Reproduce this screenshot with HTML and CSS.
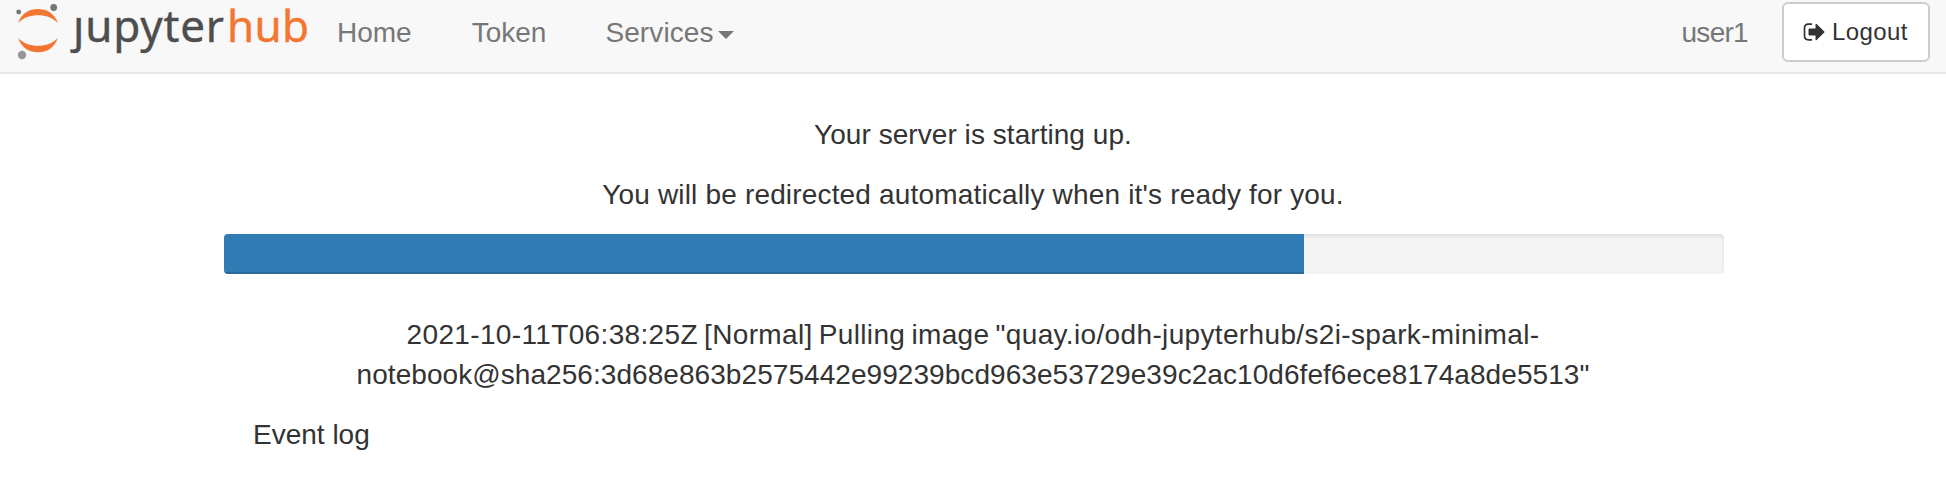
FILE: index.html
```html
<!DOCTYPE html>
<html lang="en">
<head>
<meta charset="utf-8">
<title>JupyterHub</title>
<link rel="stylesheet" href="styles.css">
</head>
<body>
<nav class="navbar">
  <a class="brand">
    <svg width="308" height="72" viewBox="0 0 308 72">
      <path d="M18 23C22 13 29 9 38 9S54 13 58 23C52 17.500 46 15.300 38 15.300S24 17.500 18 23Z" fill="#f37733"/>
      <path d="M18 38C22 48 29 52.300 38 52.300S54 48 58 38C52 43.500 46 45.800 38 45.800S24 43.500 18 38Z" fill="#f37733"/>
      <circle cx="53.700" cy="7.500" r="3.400" fill="#767677"/>
      <circle cx="18.700" cy="12" r="2.400" fill="#767677"/>
      <circle cx="22" cy="55" r="4.200" fill="#989798"/>
      <text class="wordmark" x="73" y="42" textLength="151" fill="#4e4e4e" stroke="#4e4e4e">jupyter</text>
      <rect x="70" y="3" width="15" height="14.500" fill="#f8f8f8"/>
      <text class="wordmark" x="227" y="42" textLength="82" fill="#f37733" stroke="#f37733">hub</text>
    </svg>
  </a>
  <ul class="links">
    <li class="home">Home</li>
    <li class="token">Token</li>
    <li class="services">Services<span class="caret"></span></li>
  </ul>
  <div class="account">
    <span class="user">user1</span>
    <a class="logout">
      <svg width="22" height="20" viewBox="0 0 22 20">
        <path d="M9 2.200H5.500Q1.500 2.200 1.500 6.200V13.800Q1.500 17.800 5.500 17.800H9" fill="none" stroke="#333" stroke-width="1.700"/>
        <path d="M6.500 6.500H12.500V2.200Q13 1.500 13.700 2L21.300 9.400Q21.800 10 21.300 10.600L13.700 18Q13 18.500 12.500 17.800V13.500H6.500Q5.500 13.500 5.500 12.500V7.500Q5.500 6.500 6.500 6.500Z" fill="#333"/>
      </svg>
      <span class="logout-label">Logout</span>
    </a>
  </div>
</nav>
<main class="container">
  <p class="starting">Your server is starting up.</p>
  <p class="redirect">You will be redirected automatically when it's ready for you.</p>
  <div class="progress"><div class="progress-bar" style="width:72%"></div></div>
  <p class="message"><span class="event-summary">2021-10-11T06:38:25Z [Normal] Pulling image "quay.io/odh-jupyterhub/s2i-spark-minimal-</span><br><span class="image-digest">notebook@sha256:3d68e863b2575442e99239bcd963e53729e39c2ac10d6fef6ece8174a8de5513"</span></p>
  <div class="log">Event log</div>
</main>
</body>
</html>
```
FILE: styles.css
```css
* { box-sizing: border-box; }
body {
  margin: 0;
  background: #fff;
  color: #333;
  font: 28px/40px "Liberation Sans", Arial, sans-serif;
}
.navbar {
  display: flex;
  height: 74px;
  background: #f8f8f8;
  border-bottom: 2px solid #e7e7e7;
  color: #777;
}
.brand { width: 307px; height: 72px; }
.brand svg { display: block; overflow: visible; }
.wordmark {
  font-family: "Noto Sans", "Open Sans", sans-serif;
  font-size: 44px;
  stroke-width: .4px;
}
.links {
  display: flex;
  margin: 0;
  padding: 13px 0 0;
  list-style: none;
}
.links li { padding: 0 30px; white-space: nowrap; }
.links .token { padding-right: 29px; }
.services { letter-spacing: .1px; }
.caret {
  display: inline-block;
  margin-left: 4px;
  vertical-align: middle;
  border-top: 8px solid #777;
  border-left: 8px solid transparent;
  border-right: 8px solid transparent;
}
.account {
  display: flex;
  margin-left: auto;
  padding-right: 16px;
}
.user { padding: 13px 34px 0 0; letter-spacing: -.7px; }
.logout {
  display: flex;
  width: 148px;
  height: 60px;
  margin-top: 2px;
  padding: 0 0 0 19px;
  align-items: center;
  gap: 7px;
  border: 2px solid #ccc;
  border-radius: 6px;
  background: #fff;
  color: #333;
  font-size: 24px;
}
.logout-label { letter-spacing: .4px; }
.container {
  width: 1500px;
  margin: 0 auto;
  padding-top: 41px;
  position: relative;
  left: 1px;
  text-align: center;
}
.container p { margin: 0 0 20px; padding-right: 2px; white-space: nowrap; }
.starting { letter-spacing: .05px; }
.container .redirect { margin-bottom: 19px; letter-spacing: .17px; }
.progress {
  height: 40px;
  margin-bottom: 41px;
  overflow: hidden;
  border-radius: 4px;
  background: #f5f5f5;
  box-shadow: inset 0 2px 4px rgba(0, 0, 0, .1);
}
.progress-bar {
  height: 100%;
  background: #317cb4;
  box-shadow: inset 0 -2px 0 rgba(0, 0, 0, .15);
}
.event-summary { letter-spacing: .35px; word-spacing: -2px; }
.image-digest { letter-spacing: .06px; }
.log { padding-left: 29px; text-align: left; }
```
